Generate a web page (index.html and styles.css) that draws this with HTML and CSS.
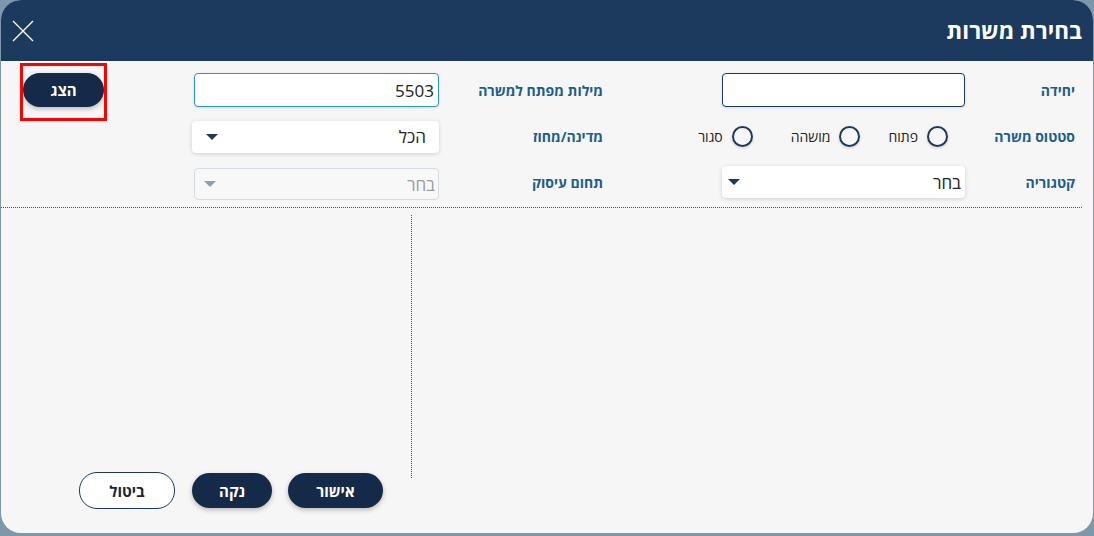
FILE: index.html
```html
<!DOCTYPE html>
<html lang="he" dir="rtl">
<head>
<meta charset="utf-8">
<title>בחירת משרות</title>
<link rel="stylesheet" href="styles.css">
</head>
<body>
<div class="dialog">
  <header class="dialog-header">
    <h1 class="dialog-title">בחירת משרות</h1>
    <button class="close-btn" aria-label="סגור">
      <svg width="22" height="22" viewBox="0 0 22 22"><path d="M1 1 L21 21 M21 1 L1 21" stroke="#ffffff" stroke-width="1.4" fill="none"/></svg>
    </button>
  </header>

  <section class="filters">
    <label class="lbl r1">יחידה</label>
    <div class="ctl r1"><input class="input input-dark" type="text"></div>

    <label class="lbl r1 c2">מילות מפתח למשרה</label>
    <div class="ctl r1 c2"><input class="input input-teal" type="text" value="5503"></div>

    <div class="show-cell r1">
      <button class="pill pill-dark show-btn">הצג</button>
    </div>

    <label class="lbl r2">סטטוס משרה</label>
    <div class="ctl r2 radios">
      <label class="radio"><span class="circle"></span><span>פתוח</span></label>
      <label class="radio"><span class="circle"></span><span>מושהה</span></label>
      <label class="radio radio-last"><span class="circle"></span><span>סגור</span></label>
    </div>

    <label class="lbl r2 c2">מדינה/מחוז</label>
    <div class="ctl r2 c2"><div class="select sel-all"><span>הכל</span><span class="caret"></span></div></div>

    <label class="lbl r3">קטגוריה</label>
    <div class="ctl r3"><div class="select sel-cat"><span>בחר</span><span class="caret"></span></div></div>

    <label class="lbl r3 c2">תחום עיסוק</label>
    <div class="ctl r3 c2"><div class="select sel-disabled"><span>בחר</span><span class="caret caret-light"></span></div></div>
  </section>

  <div class="hr-dotted"></div>

  <section class="results">
    <div class="results-main"></div>
    <div class="results-side">
      <div class="side-area"></div>
      <div class="footer">
        <button class="pill pill-dark btn-ok">אישור</button>
        <button class="pill pill-dark btn-clear">נקה</button>
        <button class="pill pill-outline btn-cancel">ביטול</button>
      </div>
    </div>
  </section>
</div>
</body>
</html>
```

FILE: styles.css
```css
* { box-sizing: border-box; }

html, body {
  margin: 0;
  padding: 0;
}

body {
  background: #7d98aa;
  font-family: "Open Sans", "Liberation Sans", "DejaVu Sans", sans-serif;
  width: 1094px;
  height: 536px;
  overflow: hidden;
}

.dialog {
  margin: 0 1px 0 1px;
  height: 533px;
  background: #f6f6f6;
  border-radius: 20px;
  overflow: hidden;
  display: flex;
  flex-direction: column;
}

.dialog-header {
  height: 61px;
  flex: none;
  background: #1c3a5e;
  display: flex;
  align-items: center;
  justify-content: space-between;
  padding: 0 11px 0 11px;
}

.dialog-title {
  margin: 0;
  color: #ffffff;
  font-size: 22.5px;
  font-weight: 700;
  line-height: 1;
  padding-top: 1px;
}

.close-btn {
  background: none;
  border: none;
  padding: 0;
  width: 22px;
  height: 22px;
  display: flex;
  cursor: pointer;
}

/* Filters grid */
.filters {
  display: grid;
  grid-template-columns: 110px 243px 119px 164px 245px 1fr;
  grid-template-rows: 34px 33px 33px;
  row-gap: 13px;
  padding: 12px 18px 8px 0;
  align-items: center;
}

.r1 { grid-row: 1; }
.r2 { grid-row: 2; }
.r3 { grid-row: 3; }

.lbl { grid-column: 1; }
.ctl { grid-column: 2; }
.lbl.c2 { grid-column: 4; }
.ctl.c2 { grid-column: 5; }
.show-cell { grid-column: 6; }

.lbl {
  color: #1b5e8c;
  font-size: 14px;
  font-weight: 700;
  text-align: right;
}

.ctl { height: 100%; display: flex; align-items: center; }

.input {
  width: 100%;
  height: 34px;
  border-radius: 4px;
  background: #ffffff;
  font-family: inherit;
  font-size: 17px;
  color: #222222;
  padding: 0 4px 0 6px;
  text-align: right;
  outline: none;
  box-shadow: 0 1px 3px rgba(0, 0, 0, 0.12);
}

.input-dark { border: 1px solid #1c3a5e; }
.input-teal { border: 1px solid #2a9ab3; }

.select {
  width: 100%;
  height: 32px;
  border-radius: 4px;
  background: #ffffff;
  display: flex;
  align-items: center;
  justify-content: space-between;
  font-size: 17px;
  color: #222222;
  box-shadow: 0 1px 4px rgba(0, 0, 0, 0.16);
}

.sel-all { padding: 0 13px 0 14px; margin-left: -2px; width: calc(100% + 2px); }
.sel-cat { padding: 0 4px 0 6px; margin-top: -1px; }
.sel-disabled {
  height: 32px;
  margin-top: 3px;
  padding: 0 3px 0 9px;
  border: 1px solid #d6dce3;
  box-shadow: none;
  color: #9a9ea4;
  background: #f8f8f8;
}

.caret {
  width: 0;
  height: 0;
  border-left: 6px solid transparent;
  border-right: 6px solid transparent;
  border-top: 6px solid #1c3a5e;
}
.caret-light { border-top-color: #8d9fb3; }

/* Radios */
.radios {
  gap: 28px;
  padding-right: 17px;
}

.radio {
  display: flex;
  align-items: center;
  gap: 9px;
  font-size: 14px;
  color: #222222;
}

.radio-last { margin-right: 10px; }

.circle {
  width: 21px;
  height: 21px;
  border-radius: 50%;
  border: 2px solid #1c3a5e;
  background: transparent;
  box-shadow: 0 1px 3px rgba(0, 0, 0, 0.18);
}

/* Show button */
.show-cell {
  display: flex;
  justify-content: flex-end;
  align-self: stretch;
  padding-left: 22px;
}

.pill {
  height: 35px;
  border-radius: 18px;
  font-family: inherit;
  font-size: 15px;
  font-weight: 700;
  cursor: pointer;
  padding: 0;
}

.pill-dark {
  background: #152a48;
  color: #ffffff;
  border: none;
  box-shadow: 0 2px 5px rgba(0, 0, 0, 0.25);
}

.pill-outline {
  background: #ffffff;
  color: #1b2533;
  border: 1px solid #1c3a5e;
}

.show-btn {
  position: relative;
  width: 81px;
  height: 34px;
}

.show-btn::after {
  content: "";
  position: absolute;
  top: -10px;
  bottom: -14px;
  left: -3px;
  right: -3px;
  border: 3px solid #ff0000;
  pointer-events: none;
}

/* Divider */
.hr-dotted {
  margin: 0 0 0 11px;
  margin-left: 0;
  margin-right: 11px;
  border-top: 1px dotted #1d5f8a;
  flex: none;
}

/* Results */
.results {
  flex: 1;
  display: grid;
  grid-template-columns: 1fr 411px;
}

.results-side {
  display: flex;
  flex-direction: column;
}

.side-area {
  height: 263px;
  margin-top: 7px;
  border-right: 1px dotted #1d5f8a;
}

.footer {
  display: flex;
  gap: 16px;
  margin-top: -5px;
  padding-right: 29px;
}

.btn-ok { width: 95px; }
.btn-clear { width: 80px; }
.btn-cancel { width: 96px; height: 37px; margin-top: -1px; margin-right: 1px; }
```
